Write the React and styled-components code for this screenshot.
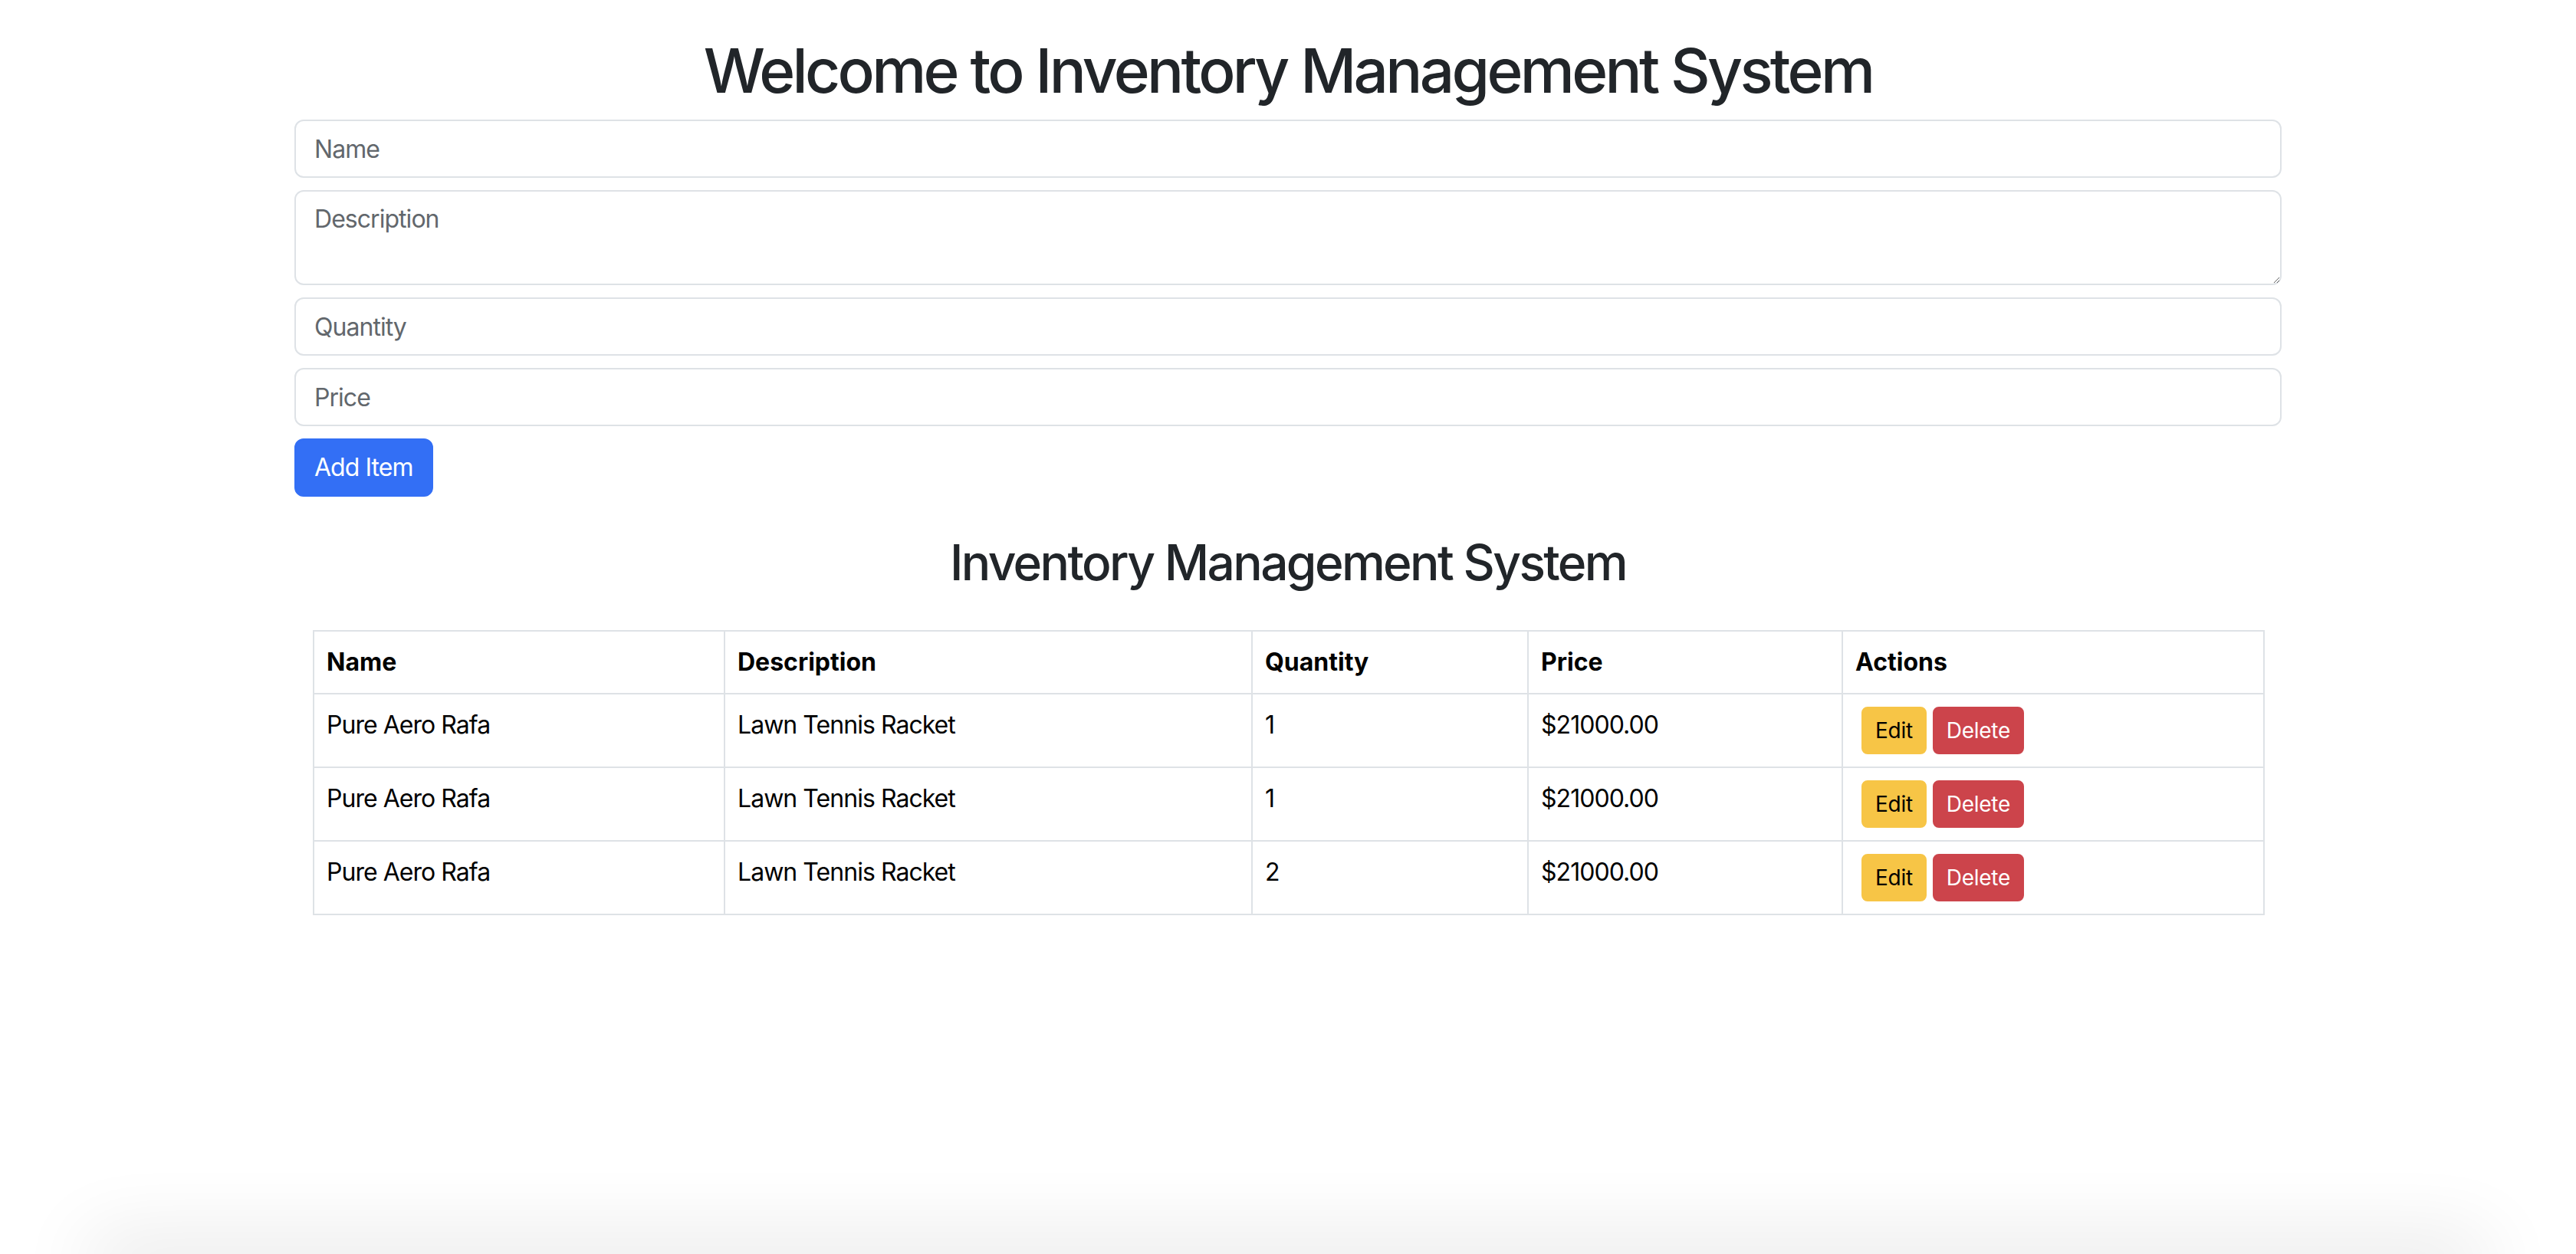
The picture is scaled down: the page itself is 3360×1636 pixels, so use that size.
import styled, { createGlobalStyle } from 'styled-components';
import { useState } from "react";

const GlobalStyle = createGlobalStyle`
    * {
        box-sizing: border-box;
    }

    body {
        margin: 0;
        background: #FFFFFF;
        font-family: 'Inter', 'Noto Sans', sans-serif;
        font-size: 32px;
        line-height: 1.5;
        letter-spacing: -0.03em;
        color: #212529;
    }
`;

const initialItems = [
    { name: "Pure Aero Rafa", description: "Lawn Tennis Racket", quantity: 1, price: 21000 },
    { name: "Pure Aero Rafa", description: "Lawn Tennis Racket", quantity: 1, price: 21000 },
    { name: "Pure Aero Rafa", description: "Lawn Tennis Racket", quantity: 2, price: 21000 },
];

const columns = [
    { label: "Name", width: 536 },
    { label: "Description", width: 688 },
    { label: "Quantity", width: 360 },
    { label: "Price", width: 410 },
    { label: "Actions", width: 550 },
];

export default function App() {
    const [items, setItems] = useState(initialItems);
    const [form, setForm] = useState({ name: "", description: "", quantity: "", price: "" });

    function addItem() {
        if(form.name === "" || form.quantity === "" || form.price === "") return;
        setItems([...items, { ...form, quantity: Number(form.quantity), price: Number(form.price) }]);
        setForm({ name: "", description: "", quantity: "", price: "" });
    }

    function removeItem(index) {
        setItems(items.filter((_, i) => i !== index));
    }

    return (
        <Page>
            <GlobalStyle />
            <Container>
                <Title>Welcome to Inventory Management System</Title>
                <Form onSubmit={e => { e.preventDefault(); addItem(); }}>
                    <Input type="text" placeholder="Name" value={form.name}
                        onChange={e => setForm({ ...form, name: e.target.value })} />
                    <TextArea placeholder="Description" value={form.description}
                        onChange={e => setForm({ ...form, description: e.target.value })} />
                    <Input type="number" placeholder="Quantity" value={form.quantity}
                        onChange={e => setForm({ ...form, quantity: e.target.value })} />
                    <Input type="number" placeholder="Price" value={form.price}
                        onChange={e => setForm({ ...form, price: e.target.value })} />
                    <PrimaryButton type="submit">Add Item</PrimaryButton>
                </Form>

                <SubTitle>Inventory Management System</SubTitle>
                <TableWrap>
                    <Table>
                        <colgroup>
                            {columns.map(c => <col key={c.label} style={{ width: c.width }} />)}
                        </colgroup>
                        <thead>
                            <tr>
                                {columns.map(c => <Th key={c.label}>{c.label}</Th>)}
                            </tr>
                        </thead>
                        <tbody>
                            {items.map((item, i) => (
                                <tr key={i}>
                                    <Td>{item.name}</Td>
                                    <Td>{item.description}</Td>
                                    <Td>{item.quantity}</Td>
                                    <Td>${item.price.toFixed(2)}</Td>
                                    <Td>
                                        <Actions>
                                            <SmallButton variant="warning">Edit</SmallButton>
                                            <SmallButton variant="danger" onClick={() => removeItem(i)}>Delete</SmallButton>
                                        </Actions>
                                    </Td>
                                </tr>
                            ))}
                        </tbody>
                    </Table>
                </TableWrap>
            </Container>
            <Footer />
        </Page>
    );
}

const Page = styled.div`
    height: 100vh;
    display: flex;
    flex-direction: column;
    overflow: hidden;
`;

const Container = styled.div`
    width: 100%;
    max-width: 2640px;
    margin: 0 auto;
    padding: 0 24px;
`;

const Title = styled.h1`
    margin: 44px 0 16px;
    font-size: 80px;
    font-weight: 500;
    line-height: 1.2;
    letter-spacing: -0.046em;
    text-align: center;
    color: #212529;
`;

const Form = styled.form`
    display: flex;
    flex-direction: column;
    gap: 16px;
`;

const Input = styled.input`
    width: 100%;
    height: 76px;
    padding: 12px 24px;
    border: 2px solid #DEE2E6;
    border-radius: 12px;
    background: #FFFFFF;
    font-family: 'Inter', 'Noto Sans', sans-serif;
    font-size: 32px;
    line-height: 1.5;
    letter-spacing: -0.03em;
    color: #212529;
    outline: none;
    appearance: textfield;

    &::-webkit-outer-spin-button,
    &::-webkit-inner-spin-button {
        -webkit-appearance: none;
        margin: 0;
    }

    &::placeholder {
        color: #62676C;
        opacity: 1;
    }
`;

const TextArea = styled.textarea`
    display: block;
    width: 100%;
    height: 124px;
    padding: 12px 24px;
    border: 2px solid #DEE2E6;
    border-radius: 12px;
    background: #FFFFFF;
    font-family: 'Inter', 'Noto Sans', sans-serif;
    font-size: 32px;
    line-height: 1.5;
    letter-spacing: -0.03em;
    color: #212529;
    outline: none;
    resize: vertical;

    &::placeholder {
        color: #62676C;
        opacity: 1;
    }
`;

const PrimaryButton = styled.button`
    align-self: flex-start;
    height: 76px;
    padding: 12px 24px;
    border: 2px solid #336FF5;
    border-radius: 12px;
    background: #336FF5;
    font-family: 'Inter', 'Noto Sans', sans-serif;
    font-size: 32px;
    line-height: 1.5;
    letter-spacing: -0.03em;
    color: #FFFFFF;
    cursor: pointer;
`;

const SubTitle = styled.h2`
    margin: 48px 0 0;
    font-size: 64px;
    font-weight: 500;
    line-height: 1.2;
    letter-spacing: -0.041em;
    text-align: center;
    color: #212529;
`;

const TableWrap = styled.div`
    padding: 49px 24px 0;
`;

const Table = styled.table`
    width: 100%;
    table-layout: fixed;
    border-collapse: collapse;
    border: 2px solid #DEE2E6;
    color: #000000;
`;

const Th = styled.th`
    padding: 16px;
    border: 2px solid #DEE2E6;
    font-weight: 700;
    letter-spacing: normal;
    text-align: left;
    vertical-align: top;
`;

const Td = styled.td`
    padding: 16px;
    border: 2px solid #DEE2E6;
    vertical-align: top;
`;

const Actions = styled.div`
    display: flex;
    gap: 8px;
    padding-left: 8px;
`;

const SmallButton = styled.button`
    height: 62px;
    padding: 8px 16px;
    border: 2px solid ${p => p.variant === "danger" ? "#CC444B" : "#F7C546"};
    border-radius: 8px;
    background: ${p => p.variant === "danger" ? "#CC444B" : "#F7C546"};
    font-family: 'Inter', 'Noto Sans', sans-serif;
    font-size: 28px;
    line-height: 1.5;
    letter-spacing: -0.01em;
    color: ${p => p.variant === "danger" ? "#FFFFFF" : "#000000"};
    cursor: pointer;
`;

const Footer = styled.div`
    flex-shrink: 0;
    height: 60px;
    margin: auto 110px -60px;
    border-radius: 40px;
    background: #FFFFFF;
    box-shadow: 0 -20px 100px rgba(0, 0, 0, 0.11);
`;
